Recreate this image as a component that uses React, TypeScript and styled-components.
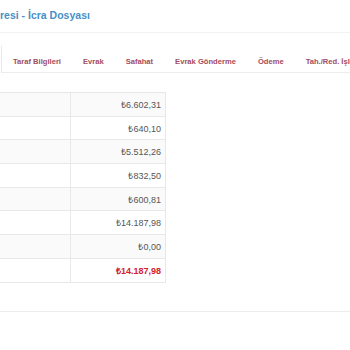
import React from "react";
import styled, { createGlobalStyle } from "styled-components";

const GlobalStyle = createGlobalStyle`
  html, body {
    margin: 0;
    padding: 0;
    background: #fff;
    font-family: "Liberation Sans", Arial, sans-serif;
  }
`;

const tabs = ["Taraf Bilgileri", "Evrak", "Safahat", "Evrak Gönderme", "Ödeme", "Tah./Red. İşlemleri"];

const rows = [
  { label: "Asıl Alacak", value: "₺6.602,31" },
  { label: "İşlemiş Faiz", value: "₺640,10" },
  { label: "Takip Masrafı", value: "₺5.512,26" },
  { label: "Vekalet Ücreti", value: "₺832,50" },
  { label: "Diğer", value: "₺600,81" },
  { label: "Toplam", value: "₺14.187,98" },
  { label: "Tahsilat", value: "₺0,00" },
  { label: "Kalan", value: "₺14.187,98", total: true },
];

const App = () => {
  return (
    <Page>
      <GlobalStyle />
      <Header>
        <Title>resi - İcra Dosyası</Title>
      </Header>
      <TabBar>
        {tabs.map((tab) => (
          <Tab key={tab}>{tab}</Tab>
        ))}
      </TabBar>
      <Panel>
        <Table>
          <tbody>
            {rows.map((row, i) => (
              <Row key={i} striped={i % 2 === 0}>
                <LabelCell />
                <ValueCell total={row.total}>{row.value}</ValueCell>
              </Row>
            ))}
          </tbody>
        </Table>
      </Panel>
    </Page>
  );
};

export default App;

const Page = styled.div`
  width: 350px;
  height: 350px;
  overflow: hidden;
`;

const Header = styled.div`
  height: 30px;
  border-bottom: 1px solid #f2f2f2;
  display: flex;
  align-items: center;
  padding-bottom: 2px;
`;

const Title = styled.h1`
  margin: 0;
  font-size: 10.5px;
  font-weight: bold;
  color: #4a8fc6;
  white-space: nowrap;
`;

const TabBar = styled.div`
  margin-top: 13px;
  margin-left: 1px;
  padding-top: 4px;
  box-sizing: border-box;
  height: 27px;
  display: flex;
  align-items: center;
  border-left: 1px solid #f1e6e8;
  border-bottom: 1px solid #ededed;
  white-space: nowrap;
  overflow: hidden;
`;

const Tab = styled.div`
  padding: 0 11px;
  font-size: 7.6px;
  font-weight: bold;
  color: #a24d5e;
  flex-shrink: 0;
`;

const Panel = styled.div`
  padding-top: 19px;
  height: 219px;
  border-bottom: 1px solid #ececec;
`;

const Table = styled.table`
  width: 166px;
  border-collapse: collapse;
  border-top: 1px solid #e6e6e6;
`;

const Row = styled.tr<{ striped?: boolean }>`
  height: 23.7px;
  background: ${(p) => (p.striped ? "#fafafa" : "#fff")};
  border-bottom: 1px solid #e8e8e8;
`;

const LabelCell = styled.td`
  width: 70px;
  padding: 0;
  border-right: 1px solid #e8e8e8;
`;

const ValueCell = styled.td<{ total?: boolean }>`
  padding: 0 4px 0 0;
  text-align: right;
  font-size: 9px;
  color: ${(p) => (p.total ? "#d4202c" : "#555")};
  font-weight: ${(p) => (p.total ? "bold" : "normal")};
  border-right: 1px solid #e8e8e8;
`;
